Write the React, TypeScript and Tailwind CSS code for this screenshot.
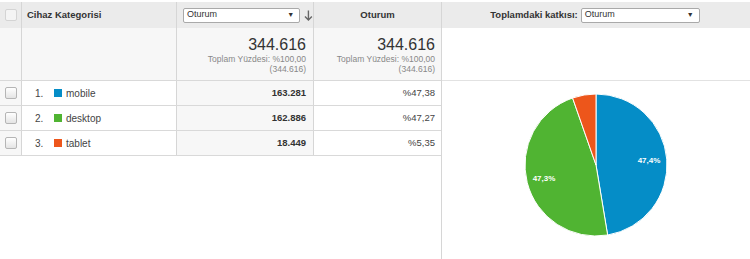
const rows = [
  { n: 1, name: 'mobile', color: 'bg-[#058dc7]', value: '163.281', pct: '%47,38' },
  { n: 2, name: 'desktop', color: 'bg-[#50b432]', value: '162.886', pct: '%47,27' },
  { n: 3, name: 'tablet', color: 'bg-[#ed561b]', value: '18.449', pct: '%5,35' },
]

function Checkbox({ light }: { light?: boolean }) {
  return (
    <div
      className={
        light
          ? 'h-[12px] w-[12px] rounded-[2px] border border-[#d4d4d4] bg-[#f4f4f4]'
          : 'h-[12px] w-[12px] rounded-[2px] border border-[#b5b5b5] bg-gradient-to-b from-white to-[#e4e4e4]'
      }
    />
  )
}

function Select({ w }: { w: string }) {
  return (
    <div
      className={`flex h-[15px] items-center justify-between rounded-[2px] border border-[#a9a9a9] bg-white pl-[3px] pr-[5px] text-[9px] font-normal text-[#333] ${w}`}
    >
      <span>Oturum</span>
      <span className="text-[7px]">▼</span>
    </div>
  )
}

// point on circle, angle in degrees clockwise from top
function pt(cx: number, cy: number, r: number, deg: number) {
  const a = (deg * Math.PI) / 180
  return [cx + r * Math.sin(a), cy - r * Math.cos(a)]
}

function slice(cx: number, cy: number, r: number, from: number, to: number) {
  const [x1, y1] = pt(cx, cy, r, from)
  const [x2, y2] = pt(cx, cy, r, to)
  const large = to - from > 180 ? 1 : 0
  return `M${cx},${cy} L${x1},${y1} A${r},${r} 0 ${large} 1 ${x2},${y2} Z`
}

function Pie() {
  const cx = 72
  const cy = 72
  const r = 71
  const a1 = 0.4738 * 360
  const a2 = a1 + 0.4727 * 360
  return (
    <svg width="144" height="144" viewBox="0 0 144 144">
      <path d={slice(cx, cy, r, 0, a1)} fill="#058dc7" stroke="#fff" strokeWidth="1" />
      <path d={slice(cx, cy, r, a1, a2)} fill="#50b432" stroke="#fff" strokeWidth="1" />
      <path d={slice(cx, cy, r, a2, 360)} fill="#ed561b" stroke="#fff" strokeWidth="1" />
      <text x="125" y="70" textAnchor="middle" fontSize="8" fontWeight="bold" fill="#fff" fontFamily="'Liberation Sans', Arial, sans-serif">
        47,4%
      </text>
      <text x="20" y="88" textAnchor="middle" fontSize="8" fontWeight="bold" fill="#fff" fontFamily="'Liberation Sans', Arial, sans-serif">
        47,3%
      </text>
    </svg>
  )
}

export default function App() {
  return (
    <div className="flex h-[259px] w-[750px] bg-white pt-[2px] font-['Liberation_Sans',Arial,sans-serif] text-[#333]">
      {/* table */}
      <div className="flex w-[441px] flex-col">
        <div className="flex h-[26px] bg-[#ebebeb] text-[9.5px] font-bold">
          <div className="flex w-[22px] items-center justify-center border-r border-[#d6d6d6]">
            <Checkbox light />
          </div>
          <div className="flex w-[155px] items-center border-r border-[#d6d6d6] pl-[5px]">
            Cihaz Kategorisi
          </div>
          <div className="flex w-[137px] items-center gap-[4px] border-r border-[#d6d6d6] pl-[6px]">
            <Select w="w-[119px]" />
            <svg width="9" height="11" viewBox="0 0 9 11">
              <path d="M4.5 0.5 V10 M1 6.5 L4.5 10 L8 6.5" stroke="#666" strokeWidth="1.4" fill="none" />
            </svg>
          </div>
          <div className="flex w-[127px] items-center justify-center">Oturum</div>
        </div>

        <div className="flex h-[53px] border-b border-[#d9d9d9] bg-[#f7f7f7]">
          <div className="w-[22px] border-r border-[#d6d6d6]" />
          <div className="w-[155px] border-r border-[#d6d6d6]" />
          <div className="flex w-[137px] flex-col items-end border-r border-[#d6d6d6] pr-[7px] pt-[7px]">
            <div className="text-[16px] leading-[19px] text-[#333]">344.616</div>
            <div className="text-right text-[8.5px] leading-[10px] text-[#888]">
              Toplam Yüzdesi: %100,00
              <br />
              (344.616)
            </div>
          </div>
          <div className="flex w-[127px] flex-col items-end pr-[6px] pt-[7px]">
            <div className="text-[16px] leading-[19px] text-[#333]">344.616</div>
            <div className="text-right text-[8.5px] leading-[10px] text-[#888]">
              Toplam Yüzdesi: %100,00
              <br />
              (344.616)
            </div>
          </div>
        </div>

        {rows.map((r) => (
          <div key={r.n} className="flex h-[25px] border-b border-[#d9d9d9] text-[10px]">
            <div className="flex w-[22px] items-center justify-center border-r border-[#d6d6d6] bg-[#f7f7f7]">
              <Checkbox />
            </div>
            <div className="flex w-[155px] items-center border-r border-[#d6d6d6] pl-[13px] text-[#444]">
              <span className="w-[19px]">{r.n}.</span>
              <span className={`mr-[4px] h-[8px] w-[8px] ${r.color}`} />
              <span>{r.name}</span>
            </div>
            <div className="flex w-[137px] items-center justify-end border-r border-[#d6d6d6] bg-[#f7f7f7] pr-[7px] text-[9.5px] font-bold text-[#333]">
              {r.value}
            </div>
            <div className="flex w-[127px] items-center justify-end pr-[6px] text-[9.5px] text-[#444]">
              {r.pct}
            </div>
          </div>
        ))}
      </div>

      {/* pie panel */}
      <div className="flex flex-1 flex-col border-l border-[#d6d6d6]">
        <div className="flex h-[26px] items-center justify-center gap-[3px] bg-[#ebebeb] pr-[2px] text-[9.5px]">
          <span className="font-bold">Toplamdaki katkısı:</span>
          <Select w="w-[119px]" />
        </div>
        <div className="h-[53px] border-b border-[#e2e2e2]" />
        <div className="flex justify-center pt-[12px]">
          <Pie />
        </div>
      </div>
    </div>
  )
}
